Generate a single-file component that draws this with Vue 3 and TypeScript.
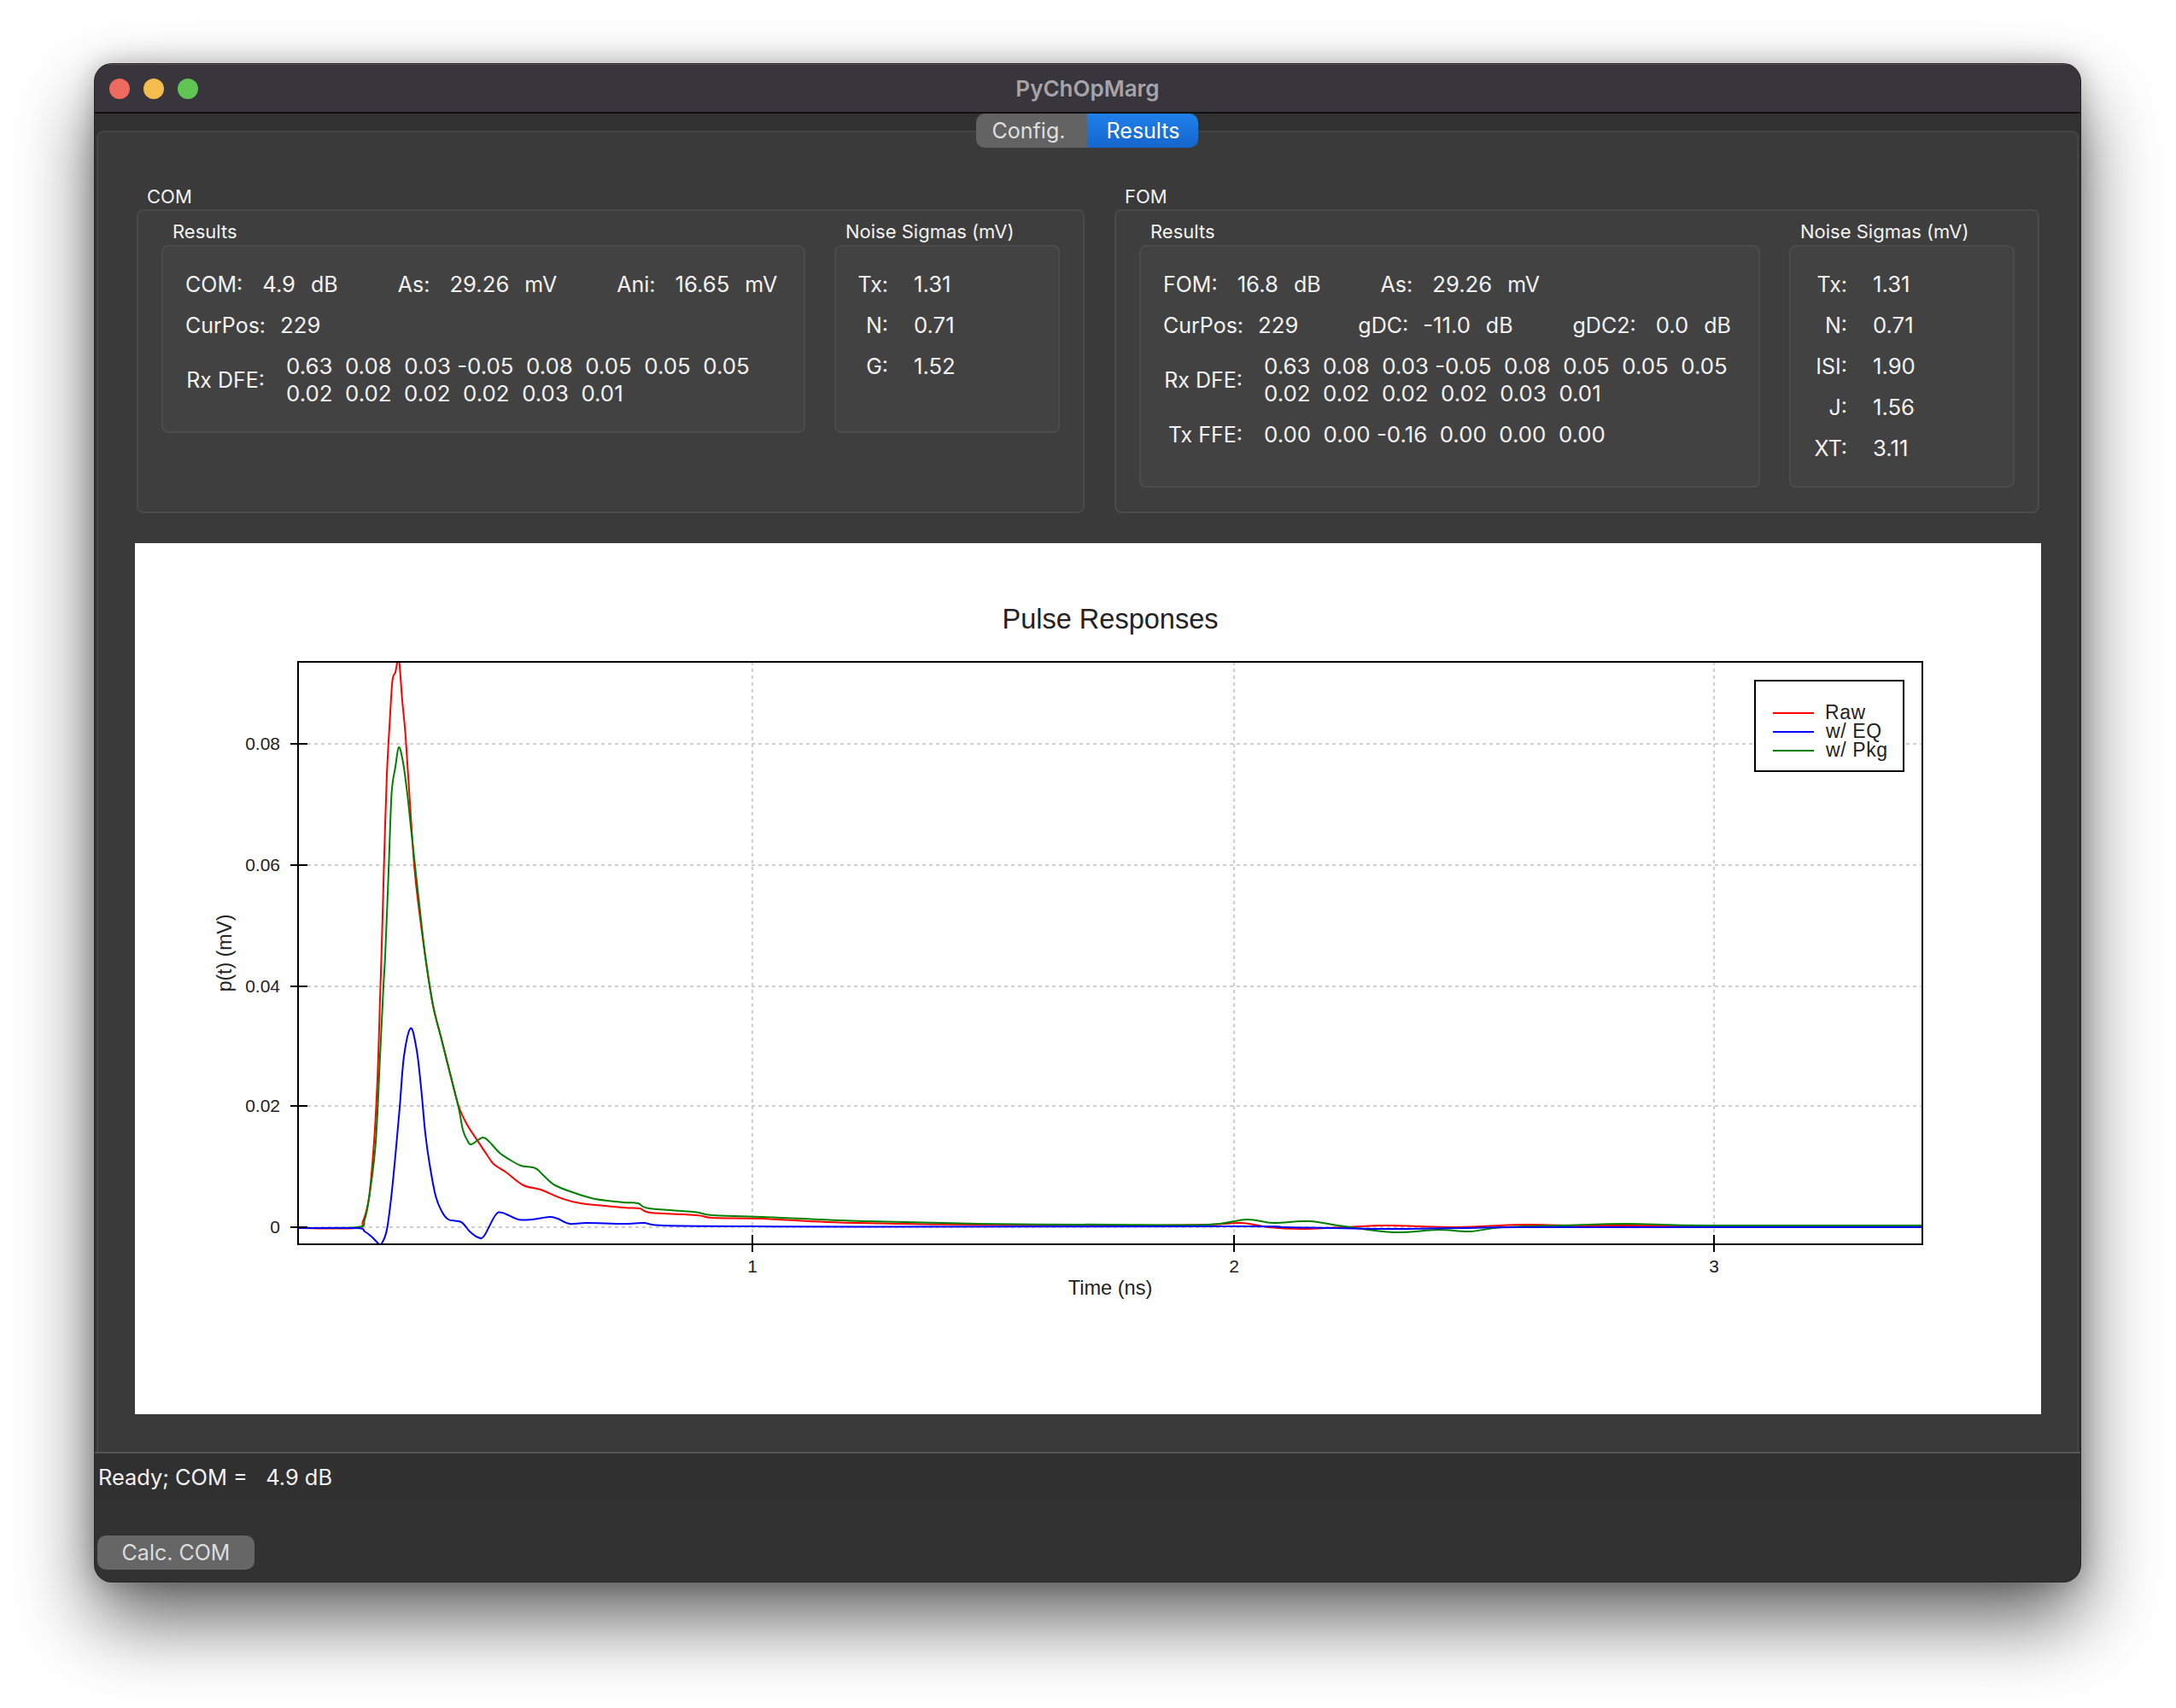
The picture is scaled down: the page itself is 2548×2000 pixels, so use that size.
<template>
  <div class="page">
    <div class="window">
      <div class="titlebar">
        <div class="lights">
          <span class="light red"></span>
          <span class="light yellow"></span>
          <span class="light green"></span>
        </div>
        <span class="title">PyChOpMarg</span>
      </div>

      <div class="body">
        <div class="pane">
          <div class="tabs">
            <span class="tab">Config.</span>
            <span class="tab active">Results</span>
          </div>

          <div class="groups">
            <div v-for="group in groups" :key="group.name" class="group-wrap">
              <div class="group-title">{{ group.name }}</div>
              <div class="group">
                <div class="sub-title">Results</div>
                <div class="sub-title">Noise Sigmas (mV)</div>
                <div class="box results">
                  <div v-for="(row, i) in group.rows" :key="i" class="row">
                    <div v-for="field in row" :key="field[0]" class="field" :class="{ tight: tightLabels.includes(field[0]) }">
                      <span>{{ field[0] }}</span>
                      <span class="val">{{ field[1] }}</span>
                      <span v-if="field[2]" class="unit">{{ field[2] }}</span>
                    </div>
                  </div>
                  <div v-for="line in group.lines" :key="line.label" class="coef">
                    <span class="coef-label">{{ line.label }}</span>
                    <div class="coef-values">
                      <div v-for="v in line.values" :key="v">{{ v }}</div>
                    </div>
                  </div>
                </div>
                <div class="box noise" :class="group.noiseClass">
                  <div v-for="n in group.noise" :key="n[0]" class="noise-row">
                    <span class="noise-label">{{ n[0] }}</span>
                    <span class="val">{{ n[1] }}</span>
                  </div>
                </div>
              </div>
            </div>
          </div>

          <div class="plot">
            <svg width="2232" height="1020" viewBox="158 636 2232 1020">
              <defs>
                <clipPath id="frame"><rect x="349" y="775" width="1902" height="682" /></clipPath>
              </defs>
              <text x="1300" y="736" class="chart-title" text-anchor="middle">Pulse Responses</text>

              <g class="grid">
                <line v-for="y in yTicks" :key="y.label" x1="360" x2="2251" :y1="y.y" :y2="y.y" />
                <line v-for="x in xTicks" :key="x.label" y1="775" y2="1447" :x1="x.x" :x2="x.x" />
              </g>

              <g clip-path="url(#frame)" fill="none" stroke-width="2" stroke-linejoin="round">
                <path :d="toPath(raw)" stroke="#ff0000" />
                <path :d="toPath(pkg)" stroke="#008000" />
                <path :d="toPath(eq)" stroke="#0000ff" />
              </g>

              <rect x="349" y="775" width="1902" height="682" fill="none" stroke="#000" stroke-width="2" />
              <g stroke="#000" stroke-width="2">
                <line v-for="y in yTicks" :key="y.label" x1="340" x2="360" :y1="y.y" :y2="y.y" />
                <line v-for="x in xTicks" :key="x.label" y1="1446" y2="1466" :x1="x.x" :x2="x.x" />
              </g>

              <g class="tick-label">
                <text v-for="y in yTicks" :key="y.label" x="328" :y="y.y + 6.5" text-anchor="end">{{ y.label }}</text>
                <text v-for="x in xTicks" :key="x.label" :x="x.x" y="1490" text-anchor="middle">{{ x.label }}</text>
              </g>
              <text x="1300" y="1516" class="axis-label time" text-anchor="middle">Time (ns)</text>
              <text class="axis-label" text-anchor="middle" transform="translate(271 1116) rotate(-90)">p(t) (mV)</text>

              <rect x="2055" y="797" width="174" height="106" fill="#fff" stroke="#000" stroke-width="2" />
              <g stroke-width="2">
                <line x1="2076" x2="2124" y1="835" y2="835" stroke="#ff0000" />
                <line x1="2076" x2="2124" y1="857" y2="857" stroke="#0000ff" />
                <line x1="2076" x2="2124" y1="879" y2="879" stroke="#008000" />
              </g>
              <g class="legend-label">
                <text x="2137" y="842">Raw</text>
                <text x="2138" y="864">w/ EQ</text>
                <text x="2138" y="886">w/ Pkg</text>
              </g>
            </svg>
          </div>
        </div>

        <div class="status">{{ statusText }}</div>
        <div class="actions">
          <span class="calc">Calc. COM</span>
        </div>
      </div>
    </div>
  </div>
</template>

<script setup lang="ts">
type Pt = [number, number]

interface Group {
  name: string
  rows: string[][][]
  lines: { label: string; values: string[] }[]
  noise: string[][]
  noiseClass: string
}

const statusText = 'Ready; COM =   4.9 dB'

// these labels sit closer to their value
const tightLabels = ['CurPos:', 'gDC:']

const dfe = [
  '0.63  0.08  0.03 -0.05  0.08  0.05  0.05  0.05',
  '0.02  0.02  0.02  0.02  0.03  0.01'
]

const groups: Group[] = [
  {
    name: 'COM',
    rows: [
      [['COM:', '4.9', 'dB'], ['As:', '29.26', 'mV'], ['Ani:', '16.65', 'mV']],
      [['CurPos:', '229']]
    ],
    lines: [{ label: 'Rx DFE:', values: dfe }],
    noise: [['Tx:', '1.31'], ['N:', '0.71'], ['G:', '1.52']],
    noiseClass: 'narrow'
  },
  {
    name: 'FOM',
    rows: [
      [['FOM:', '16.8', 'dB'], ['As:', '29.26', 'mV']],
      [['CurPos:', '229'], ['gDC:', '-11.0', 'dB'], ['gDC2:', '0.0', 'dB']]
    ],
    lines: [
      { label: 'Rx DFE:', values: dfe },
      { label: 'Tx FFE:', values: ['0.00  0.00 -0.16  0.00  0.00  0.00'] }
    ],
    noise: [['Tx:', '1.31'], ['N:', '0.71'], ['ISI:', '1.90'], ['J:', '1.56'], ['XT:', '3.11']],
    noiseClass: 'wide'
  }
]

const yTicks = [
  { label: '0.08', y: 871 },
  { label: '0.06', y: 1013 },
  { label: '0.04', y: 1155 },
  { label: '0.02', y: 1295 },
  { label: '0', y: 1437 }
]
const xTicks = [
  { label: '1', x: 881 },
  { label: '2', x: 1445 },
  { label: '3', x: 2007 }
]

// curve points read off the reference, in page pixels
const raw: Pt[] = [
  [349, 1438], [417, 1438], [425, 1430], [432, 1403], [438, 1337], [442, 1263], [445, 1170], [447.5, 1090],
  [450, 1000], [453, 907], [456.5, 843], [459.5, 797], [463, 787], [467, 772], [471, 820], [475, 863], [480, 940],
  [485, 1013], [490, 1060], [498, 1120], [507, 1177], [517, 1217], [527, 1257], [537, 1295], [547, 1317],
  [560, 1337], [570, 1352], [578, 1363], [593, 1373], [613, 1388], [633, 1393], [657, 1403], [680, 1409],
  [730, 1414], [749, 1415], [762, 1420], [816, 1423], [834, 1426], [892, 1427], [968, 1431], [1057, 1433],
  [1146, 1434], [1300, 1435], [1415, 1434], [1453, 1432], [1485, 1437], [1523, 1439], [1574, 1437],
  [1625, 1435], [1708, 1437], [1785, 1434], [1874, 1435], [2251, 1435.5]
]

const pkg: Pt[] = [
  [349, 1438], [418, 1437], [427, 1428], [433, 1397], [440, 1337], [445, 1237], [449, 1155], [451, 1120],
  [455, 1020], [458.5, 930], [463, 898], [467, 875], [472, 893], [477, 930], [482, 977], [487, 1023], [493, 1077],
  [498, 1120], [507, 1177], [517, 1217], [527, 1257], [537, 1297], [542, 1323], [547, 1335], [552, 1340],
  [565, 1332], [573, 1337], [585, 1350], [597, 1358], [610, 1365], [627, 1368], [637, 1377], [650, 1388],
  [673, 1397], [697, 1404], [730, 1408], [747, 1409], [760, 1415], [812, 1419], [834, 1423], [892, 1425],
  [1012, 1430], [1146, 1433], [1300, 1434], [1415, 1434], [1460, 1428], [1491, 1432], [1533, 1430],
  [1574, 1436], [1632, 1443], [1683, 1440], [1721, 1442], [1759, 1437], [1830, 1435], [1906, 1433],
  [2002, 1435], [2251, 1435]
]

const eq: Pt[] = [
  [349, 1438], [417, 1438], [427, 1442], [435, 1448], [443, 1456], [447, 1456], [453, 1440], [458, 1403],
  [463, 1353], [468, 1297], [473, 1237], [481, 1204], [488, 1230], [493, 1273], [498, 1327], [503, 1363],
  [510, 1400], [517, 1418], [525, 1428], [540, 1431], [550, 1442], [560, 1449], [567, 1447], [580, 1423],
  [588, 1420], [607, 1428], [623, 1428], [643, 1425], [653, 1427], [667, 1433], [687, 1432], [730, 1433],
  [754, 1432], [776, 1435], [879, 1436], [1012, 1436.5], [1453, 1436], [1504, 1437], [1619, 1439],
  [1708, 1438], [1810, 1437], [2251, 1437]
]

// catmull-rom through the points so the tails stay smooth
const toPath = (pts: Pt[]) => {
  let d = `M${pts[0][0]} ${pts[0][1]}`
  for (let i = 0; i < pts.length - 1; i++) {
    const p0 = pts[Math.max(i - 1, 0)]
    const p1 = pts[i]
    const p2 = pts[i + 1]
    const p3 = pts[Math.min(i + 2, pts.length - 1)]
    const c1x = p1[0] + (p2[0] - p0[0]) / 6
    const c1y = p1[1] + (p2[1] - p0[1]) / 6
    const c2x = p2[0] - (p3[0] - p1[0]) / 6
    const c2y = p2[1] - (p3[1] - p1[1]) / 6
    d += ` C${c1x.toFixed(1)} ${c1y.toFixed(1)} ${c2x.toFixed(1)} ${c2y.toFixed(1)} ${p2[0]} ${p2[1]}`
  }
  return d
}
</script>

<style>
body {
  background: #fff;
}
</style>

<style scoped>
.page {
  width: 2548px;
  height: 2000px;
  box-sizing: border-box;
  padding: 75px 112px 148px 111px;
  font-family: Inter, "Noto Sans", sans-serif;
  font-size: 25px;
  color: #f2f2f2;
  background: #fff;
  overflow: hidden;
}

.window {
  height: 100%;
  display: flex;
  flex-direction: column;
  border-radius: 20px;
  overflow: hidden;
  background: #313131;
  box-shadow: 0 0 0 1px #222, 0 44px 90px rgba(0, 0, 0, 0.62), 0 0 30px rgba(0, 0, 0, 0.25);
}

.titlebar {
  height: 55px;
  flex: none;
  display: flex;
  align-items: center;
  justify-content: center;
  position: relative;
  background: #38363c;
  border-top: 1px solid #55535a;
  border-bottom: 2px solid #111;
}

.lights {
  position: absolute;
  left: 17px;
  top: 16px;
  display: flex;
  gap: 16px;
}

.light {
  width: 24px;
  height: 24px;
  border-radius: 50%;
}

.red {
  background: #ee6a5f;
}

.yellow {
  background: #f5bd4f;
}

.green {
  background: #61c554;
}

.title {
  font-size: 26px;
  font-weight: 600;
  color: #a6a4a9;
}

.body {
  flex: 1;
  display: flex;
  flex-direction: column;
  min-height: 0;
  background: #313131;
}

.pane {
  margin: 20px 2px 0;
  height: 1547px;
  box-sizing: border-box;
  display: flex;
  flex-direction: column;
  padding: 0 42px 0 43px;
  background: #3a3a3a;
  border: 2px solid #454545;
  border-bottom: none;
  border-radius: 8px 8px 0 0;
}

.tabs {
  align-self: center;
  display: flex;
  margin: -22px 0 0 -3px;
  height: 40px;
  line-height: 41px;
  border-radius: 10px;
  overflow: hidden;
}

.tab {
  width: 130px;
  box-sizing: border-box;
  padding-right: 6px;
  text-align: center;
  background: #636363;
  color: #dfdfdf;
}

.tab.active {
  padding: 0 0 0 2px;
  background: linear-gradient(#1e80ea, #1566cc);
  color: #fff;
}

.groups {
  display: grid;
  grid-template-columns: 1114px 1087px;
  gap: 31px;
  margin-top: 44px;
}

.group-wrap {
  display: flex;
  flex-direction: column;
  padding: 0 2px;
}

.group-title {
  height: 28px;
  line-height: 26px;
  padding-left: 12px;
  font-size: 22px;
}

.group {
  flex: 1;
  display: grid;
  grid-template-columns: 1fr 264px;
  align-content: start;
  column-gap: 34px;
  box-sizing: border-box;
  padding: 11px 27px 28px;
  background: #3e3e3e;
  border: 2px solid #4a4a4a;
  border-radius: 8px;
}

.sub-title {
  height: 29px;
  line-height: 26px;
  padding-left: 13px;
  font-size: 22px;
  white-space: nowrap;
}

.box {
  box-sizing: border-box;
  padding: 28px 0 28px;
  display: flex;
  flex-direction: column;
  gap: 16px;
  background: #424242;
  border: 2px solid #4c4c4c;
  border-radius: 8px;
  line-height: 32px;
}

.results {
  padding-left: 26px;
}

.val {
  font-size: 25.7px;
}

.row {
  display: flex;
  gap: 70px;
  height: 32px;
}

.field {
  display: flex;
  gap: 23px;
  white-space: nowrap;
}

.field.tight {
  gap: 17px;
}

.unit {
  margin-left: -5px;
}

.field.tight .unit {
  margin-left: 1px;
}

.coef {
  display: flex;
  align-items: center;
  gap: 25px;
}

.coef-label {
  width: 93px;
  text-align: right;
  white-space: nowrap;
}

.coef-values {
  font-size: 25.85px;
  white-space: pre;
}

.noise-row {
  display: flex;
  gap: 30px;
  height: 32px;
}

.noise-label {
  text-align: right;
}

.narrow .noise-label {
  width: 61px;
}

.wide .noise-label {
  width: 66px;
}

.plot {
  margin-top: 35px;
  height: 1020px;
  background: #fff;
  overflow: hidden;
}

.plot svg {
  display: block;
}

.grid line {
  stroke: #cfcfcf;
  stroke-width: 2;
  stroke-dasharray: 4 4;
}

.chart-title {
  font-family: "Liberation Sans", Arial, sans-serif;
  font-size: 32.5px;
  fill: #222;
}

.tick-label text,
.axis-label,
.legend-label text {
  font-family: "Liberation Sans", Arial, sans-serif;
  fill: #222;
}

.tick-label text {
  font-size: 21px;
}

.axis-label {
  font-size: 23px;
}

.axis-label.time {
  font-size: 23.6px;
}

.legend-label text {
  font-size: 23px;
  letter-spacing: 0.6px;
}

.status {
  border-top: 2px solid #555;
  height: 54px;
  line-height: 56px;
  padding-left: 4px;
  font-size: 25.4px;
  white-space: pre;
  background: #303030;
}

.actions {
  flex: 1;
  padding: 42px 0 0 3px;
  background: #323232;
}

.calc {
  display: block;
  width: 184px;
  height: 40px;
  line-height: 40px;
  text-align: center;
  border-radius: 10px;
  color: #dcdcdc;
  background: #666;
}
</style>
